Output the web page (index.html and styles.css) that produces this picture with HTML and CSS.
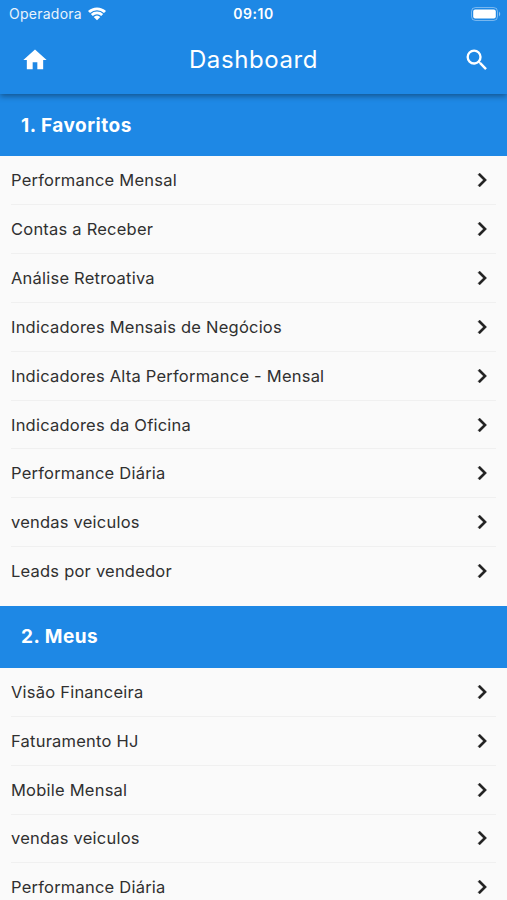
FILE: index.html
```html
<!DOCTYPE html>
<html lang="pt-BR">
<head>
<meta charset="utf-8">
<title>Dashboard</title>
<link rel="stylesheet" href="styles.css">
</head>
<body>
<svg class="defs" width="0" height="0"><symbol id="chevron" viewBox="0 0 24 24"><path d="M10 6 8.59 7.41 13.17 12l-4.58 4.59L10 18l6-6z"/></symbol></svg>
<header class="top">
  <div class="status">
    <div class="carrier"><span>Operadora</span>
      <svg class="wifi" viewBox="0 0 18 14"><path d="M0 4a13 13 0 0 1 18 0L16 6a10.200 10.200 0 0 0-14 0zM2.800 6.900a9 9 0 0 1 12.400 0L13.200 8.900a6.200 6.200 0 0 0-8.400 0zM5.700 9.900a4.900 4.900 0 0 1 6.600 0L9 13.200z"/></svg>
    </div>
    <span class="clock">09:10</span>
    <svg class="battery" viewBox="0 0 30 14"><rect x=".5" y=".5" width="26" height="13" rx="4" fill="none" stroke="#fff" stroke-opacity=".4"/><rect x="2.200" y="2.500" width="22.600" height="9" rx="2"/><path d="M28 4.500q2.500 2.500 0 5z" opacity=".5"/></svg>
  </div>
  <div class="bar">
    <svg class="icon" viewBox="0 0 24 24"><path d="M10 20v-6h4v6h5v-8h3L12 3 2 12h3v8z"/></svg>
    <h1>Dashboard</h1>
    <svg class="icon" viewBox="0 0 24 24"><path d="M15.500 14h-.79l-.28-.27A6.470 6.470 0 0 0 16 9.500 6.500 6.500 0 1 0 9.500 16c1.610 0 3.090-.59 4.230-1.570l.27.28v.79l5 4.990L20.490 19zM9.500 14a4.500 4.500 0 1 1 0-9 4.500 4.500 0 0 1 0 9z"/></svg>
  </div>
</header>
<main>
  <h2>1. Favoritos</h2>
  <ul>
    <li><span>Performance Mensal</span><svg><use href="#chevron"/></svg></li>
    <li><span>Contas a Receber</span><svg><use href="#chevron"/></svg></li>
    <li><span>Análise Retroativa</span><svg><use href="#chevron"/></svg></li>
    <li><span>Indicadores Mensais de Negócios</span><svg><use href="#chevron"/></svg></li>
    <li><span>Indicadores Alta Performance - Mensal</span><svg><use href="#chevron"/></svg></li>
    <li><span>Indicadores da Oficina</span><svg><use href="#chevron"/></svg></li>
    <li><span>Performance Diária</span><svg><use href="#chevron"/></svg></li>
    <li><span>vendas veiculos</span><svg><use href="#chevron"/></svg></li>
    <li><span>Leads por vendedor</span><svg><use href="#chevron"/></svg></li>
  </ul>
  <h2>2. Meus</h2>
  <ul>
    <li><span>Visão Financeira</span><svg><use href="#chevron"/></svg></li>
    <li><span>Faturamento HJ</span><svg><use href="#chevron"/></svg></li>
    <li><span>Mobile Mensal</span><svg><use href="#chevron"/></svg></li>
    <li><span>vendas veiculos</span><svg><use href="#chevron"/></svg></li>
    <li><span>Performance Diária</span><svg><use href="#chevron"/></svg></li>
  </ul>
</main>
</body>
</html>
```
FILE: styles.css
```css
* { box-sizing: border-box; }
body { margin: 0; height: 900px; overflow: hidden; background: #fafafa; color: #303030; font-family: Inter, sans-serif; }
.defs { display: none; }
.top { position: relative; height: 94px; background: #1e88e5; color: #fff; box-shadow: 0 2px 6px rgba(0,0,0,.4); }
.status { display: grid; grid-template-columns: 1fr auto 1fr; align-items: center; height: 27px; padding: 0 6px 0 9px; font-size: 14px; }
.carrier { display: flex; align-items: center; gap: 6px; letter-spacing: .25px; }
.carrier span { opacity: .9; }
svg { fill: currentColor; }
.wifi { width: 18px; height: 14px; }
.clock { margin-right: 3px; font-weight: 600; letter-spacing: .5px; }
.battery { width: 30px; height: 14px; justify-self: end; }
.bar { display: grid; grid-template-columns: 28px 1fr 28px; align-items: center; height: 65px; padding: 0 16px 0 21px; }
.icon { width: 28px; height: 28px; }
h1 { margin: 0 5px 0 0; text-align: center; font-size: 24px; font-weight: 400; letter-spacing: .6px; }
h2 { display: flex; align-items: center; height: 62px; margin: 0; padding-left: 21px; background: #1e88e5; color: #fff; font-size: 19px; font-weight: 650; letter-spacing: .5px; }
ul { list-style: none; margin: 0; padding: .4px 11px 9.600px; }
li { display: flex; align-items: center; justify-content: space-between; height: 48.850px; border-bottom: 1px solid #f0f0f0; font-size: 16.500px; letter-spacing: .22px; }
li:last-child { border-bottom-color: transparent; }
li svg { width: 28px; height: 28px; color: #202020; stroke: currentColor; stroke-width: .3px; }
```
